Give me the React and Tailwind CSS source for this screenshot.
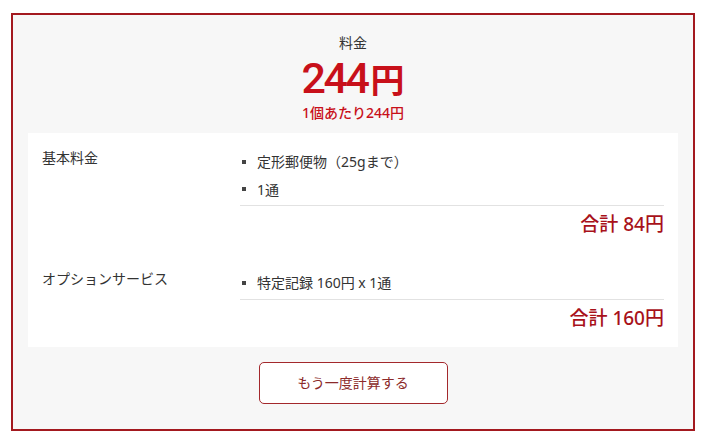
// App.jsx – 料金計算結果
const jp = { fontFamily: '"Noto Sans", "Noto Sans CJK JP", sans-serif' };

function Row({ label, items, total, className = '' }) {
  return (
    <div className={`flex ${className}`}>
      <div className="w-[198px] shrink-0 text-[14px] leading-[20px] text-[#333]">{label}</div>
      <div className="flex-1">
        <ul className="pl-[2px] pb-[2px] border-b border-[#e2e2e2]">
          {items.map((t) => (
            <li key={t} className="flex items-center text-[14px] leading-[27.5px] text-[#333]">
              <span className="w-[4px] h-[4px] bg-[#444] mr-[11px] shrink-0" />
              {t}
            </li>
          ))}
        </ul>
        <div className="mt-[5px] text-right text-[19px] leading-[26px] font-medium text-[#a8111a]">
          合計 {total}円
        </div>
      </div>
    </div>
  );
}

export default function App() {
  return (
    <main className="min-h-screen bg-white pl-[11px] pt-[13px]" style={jp}>
      <section className="w-[684px] border-2 border-[#a3191f] bg-[#f7f7f7] px-[15px] pt-[18px] pb-[25px]">
        <div className="text-center">
          <div className="text-[14px] leading-[20px] text-[#333]">料金</div>
          <div className="mt-[4px] h-[42px] flex items-baseline justify-center leading-[42px] text-[#c8101a]">
            <span className="text-[43px] font-medium tracking-[-2.5px]" style={{ fontFamily: 'Roboto, "Liberation Sans", sans-serif' }}>244</span>
            <span className="text-[34px] font-bold ml-[3px]" style={{ fontFamily: '"Noto Sans CJK JP", sans-serif' }}>円</span>
          </div>
          <div className="mt-[4px] text-[14px] leading-[20px] font-medium text-[#c8101a]">1個あたり244円</div>
        </div>

        <div className="mt-[10px] bg-white px-[14px] pt-[15px] pb-[16px]">
          <Row label="基本料金" items={['定形郵便物（25gまで）', '1通']} total="84" />
          <Row label="オプションサービス" items={['特定記録 160円 x 1通']} total="160" className="mt-[32px]" />
        </div>

        <div className="mt-[15px] flex justify-center">
          <button className="w-[189px] h-[42px] bg-white border border-[#a3282c] rounded-[5px] text-[14px] text-[#8c2a2a]">
            もう一度計算する
          </button>
        </div>
      </section>
    </main>
  );
}
